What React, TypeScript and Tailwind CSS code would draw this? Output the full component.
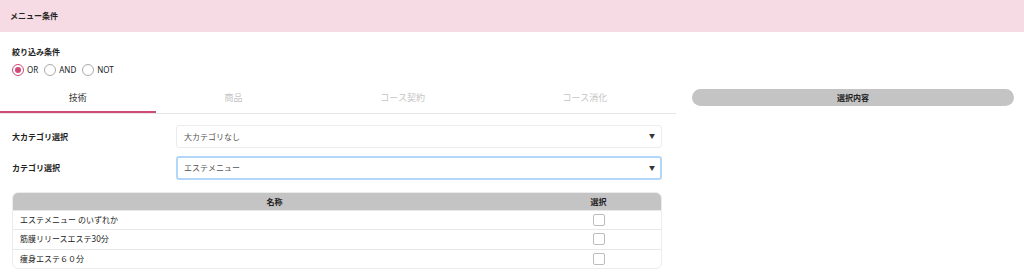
export default function App() {
  const tabs = ["技術", "商品", "コース契約", "コース消化"];
  const rows = ["エステメニュー のいずれか", "筋膜リリースエステ30分", "痩身エステ６０分"];
  const modes = ["OR", "AND", "NOT"];

  return (
    <main
      className="w-[1024px] h-[278px] overflow-hidden bg-white text-[#222]"
      style={{ fontFamily: '"Noto Sans", "Noto Sans CJK JP", sans-serif' }}
    >
      {/* Header */}
      <div className="h-[32px] bg-[#f6dbe4] px-[10px] flex items-center">
        <h1 className="text-[8px] font-bold">メニュー条件</h1>
      </div>

      {/* Filter mode */}
      <div className="px-[12px] pt-[13px]">
        <p className="text-[8px] font-bold leading-[14px]">絞り込み条件</p>
        <div className="flex items-center gap-[6px] mt-[4px] h-[14px]">
          {modes.map((m, i) => (
            <label key={m} className="flex items-center gap-[3px] text-[8px]">
              <span
                className={
                  i === 0
                    ? "w-[12px] h-[12px] rounded-full border border-[#d04a78] flex items-center justify-center"
                    : "w-[12px] h-[12px] rounded-full border border-[#aaa]"
                }
              >
                {i === 0 && <span className="w-[6px] h-[6px] rounded-full bg-[#d04a78]" />}
              </span>
              {m}
            </label>
          ))}
        </div>
      </div>

      <div className="flex mt-[7px]">
        {/* Left column */}
        <div className="w-[676px]">
          {/* Tabs */}
          <div className="flex border-b border-[#e6e6e6]">
            {tabs.map((t, i) => (
              <div
                key={t}
                className={
                  i === 0
                    ? "flex-auto h-[29px] flex items-center justify-center text-[9px] text-[#333] border-b-[2px] border-[#d04a78]"
                    : "flex-auto h-[29px] flex items-center justify-center text-[9px] text-[#c4c4c4] border-b-[2px] border-transparent"
                }
              >
                {t}
              </div>
            ))}
          </div>

          {/* Selects */}
          <div className="pl-[12px] pr-[14px] pt-[11px] flex flex-col gap-[8px]">
            <div className="flex items-center">
              <span className="w-[164px] text-[8px] font-bold">大カテゴリ選択</span>
              <div className="flex-1 h-[23px] border border-[#ececec] rounded-[3px] flex items-center justify-between pl-[7px] pr-[6px] text-[8px] text-[#555]">
                <span>大カテゴリなし</span>
                <span className="text-[6px] text-[#333]">▼</span>
              </div>
            </div>
            <div className="flex items-center">
              <span className="w-[164px] text-[8px] font-bold">カテゴリ選択</span>
              <div className="flex-1 h-[24px] border-2 border-[#b3d7f8] rounded-[3px] flex items-center justify-between pl-[6px] pr-[5px] text-[8px] text-[#555]">
                <span>エステメニュー</span>
                <span className="text-[6px] text-[#333]">▼</span>
              </div>
            </div>

            {/* Table */}
            <div className="mt-[4px] border border-[#ececec] rounded-[6px] overflow-hidden">
              <div className="flex h-[17px] bg-[#c4c4c4] text-[8px] font-bold items-center">
                <span className="w-[523px] text-center">名称</span>
                <span className="flex-1 text-center">選択</span>
              </div>
              {rows.map((r) => (
                <div key={r} className="flex h-[19.3px] items-center border-t border-[#e8e8e8] text-[8px]">
                  <span className="w-[523px] pl-[7px]">{r}</span>
                  <span className="flex-1 flex justify-center">
                    <span className="w-[12px] h-[12px] rounded-[2px] border border-[#bdbdbd]" />
                  </span>
                </div>
              ))}
            </div>
          </div>
        </div>

        {/* Right column */}
        <div className="flex-1 pl-[16px] pr-[10px] pt-[5px]">
          <div className="h-[17px] rounded-full bg-[#c4c4c4] flex items-center justify-center text-[8px] font-bold">
            選択内容
          </div>
        </div>
      </div>
    </main>
  );
}
